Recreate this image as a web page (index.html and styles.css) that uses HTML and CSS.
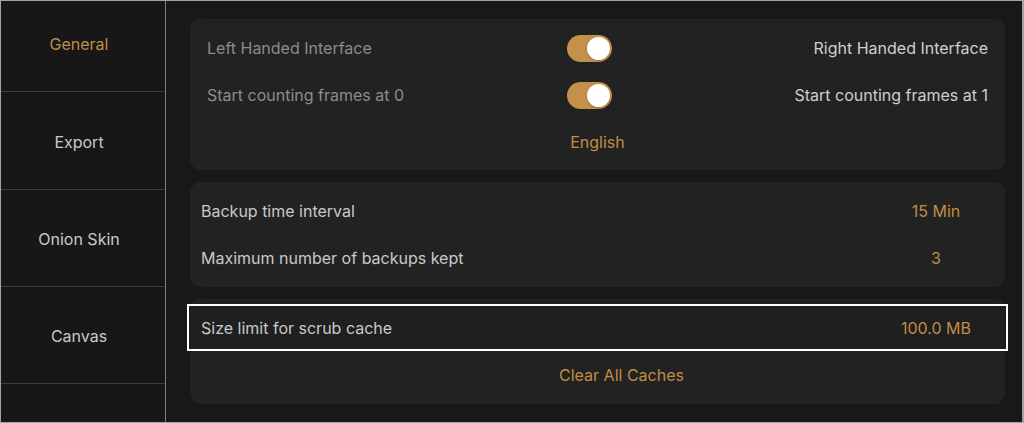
FILE: index.html
```html
<!DOCTYPE html>
<html lang="en">
<head>
<meta charset="utf-8">
<title>Settings</title>
<link rel="stylesheet" href="styles.css">
</head>
<body>
<div class="frame">
  <nav class="sidebar">
    <div class="tab active">General</div>
    <div class="tab">Export</div>
    <div class="tab">Onion Skin</div>
    <div class="tab">Canvas</div>
    <div class="tab empty"></div>
  </nav>
  <main class="main">
    <section class="card card-toggles">
      <div class="trow">
        <span class="dim">Left Handed Interface</span>
        <span class="toggle"><span class="knob"></span></span>
        <span class="right">Right Handed Interface</span>
      </div>
      <div class="trow">
        <span class="dim">Start counting frames at 0</span>
        <span class="toggle"><span class="knob"></span></span>
        <span class="right">Start counting frames at 1</span>
      </div>
      <div class="crow gold">English</div>
    </section>
    <section class="card">
      <div class="row"><span>Backup time interval</span><span class="val">15 Min</span></div>
      <div class="row"><span>Maximum number of backups kept</span><span class="val">3</span></div>
    </section>
    <section class="card">
      <div class="row hl"><span>Size limit for scrub cache</span><span class="val">100.0 MB</span></div>
      <div class="crow crow-shift gold">Clear All Caches</div>
    </section>
  </main>
</div>
</body>
</html>
```
FILE: styles.css
```css
* { box-sizing: border-box; }
html, body { margin: 0; padding: 0; background: #181818; }
body {
  font-family: Inter, "Noto Sans", "Liberation Sans", sans-serif;
  font-size: 16px;
  color: #c9c9c9;
}
.frame {
  width: 1024px;
  height: 423px;
  border: 1px solid #a3a3a3;
  border-right-width: 2px;
  display: flex;
  background: #181818;
  overflow: hidden;
}
.sidebar {
  width: 165px;
  flex: none;
  border-right: 1px solid #7d7d7d;
  display: flex;
  flex-direction: column;
  background: #171717;
}
.tab {
  height: 97px;
  flex: none;
  display: flex;
  align-items: center;
  justify-content: center;
  padding: 2px 8px 0 0;
  border-bottom: 1px solid #3d3d3d;
  color: #c9c9c9;
  font-size: 16px;
}
.tab:first-child { height: 91px; padding: 0 8px 4px 0; }
.tab:nth-child(2) { height: 98px; }
.tab.active { color: #c08d45; }
.tab.empty { border-bottom: none; }
.main {
  flex: 1;
  padding: 18px 17px 0 24px;
  display: flex;
  flex-direction: column;
  gap: 12px;
}
.card {
  background: #222222;
  border-radius: 11px;
  padding: 5px 0 6px;
}
.card-toggles { padding: 5px 0 5px; }
.trow {
  height: 47px;
  display: grid;
  grid-template-columns: 360px 45px 1fr;
  align-items: center;
  padding: 0 17px;
}
.trow .toggle { margin-top: 1px; }
.dim { color: #8c8c8c; }
.right { text-align: right; color: #cfcfcf; }
.toggle {
  width: 45px;
  height: 27px;
  border-radius: 14px;
  background: #c4914a;
  display: flex;
  align-items: center;
  justify-content: flex-end;
  padding: 2px;
}
.knob {
  width: 23px;
  height: 23px;
  border-radius: 50%;
  background: #ffffff;
  box-shadow: 0 1px 2px rgba(0,0,0,0.25);
}
.crow {
  height: 47px;
  display: flex;
  align-items: center;
  justify-content: center;
}
.crow-shift { padding-left: 48px; }
.gold { color: #c08d45; }
.row {
  height: 47px;
  display: flex;
  align-items: center;
  justify-content: space-between;
  padding: 0 14px 0 11px;
}
.val {
  width: 110px;
  text-align: center;
  color: #c08d45;
}
.row.hl {
  position: relative;
  background: #1f1f1f;
}
.row.hl::after {
  content: "";
  position: absolute;
  top: 0;
  bottom: 0;
  left: -3px;
  right: -3px;
  border: 2px solid #ffffff;
}
```
